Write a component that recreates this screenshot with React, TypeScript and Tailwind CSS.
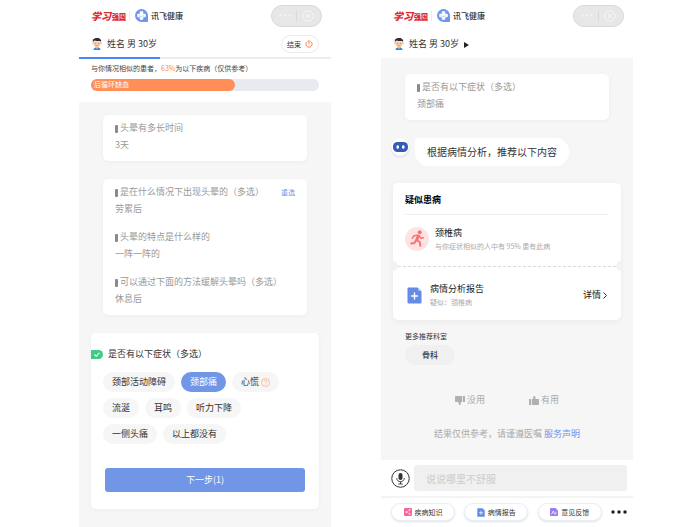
import React, { useState } from 'react';
import clsx from 'clsx';

interface QA {
  question: string;
  answer: string;
}

const history: QA[][] = [
  [{ question: '头晕有多长时间', answer: '3天' }],
  [
    { question: '是在什么情况下出现头晕的（多选）', answer: '劳累后' },
    { question: '头晕的特点是什么样的', answer: '一阵一阵的' },
    { question: '可以通过下面的方法缓解头晕吗（多选）', answer: '休息后' },
  ],
];

const symptomRows = [
  ['颈部活动障碍', '颈部痛', '心慌'],
  ['流涎', '耳鸣', '听力下降'],
  ['一侧头痛', '以上都没有'],
];

const BrandMark = () => (
  <svg viewBox="0 0 26 26" className="w-[13px] h-[13px] shrink-0" aria-hidden="true">
    <path d="M13 0a13 13 0 0 1 13 13v11.500a1.500 1.500 0 0 1-1.500 1.500H13A13 13 0 0 1 13 0z" fill="#7196ee" />
    <path d="M10.500 5.500h5v5h5v5h-5v5h-5v-5h-5v-5h5z" fill="#fff" stroke="#fff" strokeWidth="2" strokeLinejoin="round" />
    <path d="M7.500 13c3 2.500 6.500 2.500 10 0" fill="none" stroke="#a9c0f5" strokeWidth="1.500" />
  </svg>
);

const Avatar = () => (
  <svg viewBox="0 0 20 24" className="w-[10px] h-3 shrink-0" aria-hidden="true">
    <path d="M3 24c0-4 3-5.500 7-5.500s7 1.500 7 5.500z" fill="#1d8ff0" />
    <path d="M7.500 15h5v4.500L10 22l-2.500-2.500z" fill="#f3b48d" />
    <circle cx="2.200" cy="10.500" r="1.800" fill="#f5b791" />
    <circle cx="17.800" cy="10.500" r="1.800" fill="#f5b791" />
    <path d="M3 7h14v4c0 4.500-3 7.500-7 7.500S3 15.500 3 11z" fill="#fcc9a5" />
    <path d="M2 8C1 4 2 2 4 2c2-2.500 11-2.500 13 1 1.800 1 1.500 3 1 5l-1.500-2C12 6.500 8 6 5 5L3.500 6.500z" fill="#2c2d35" />
    <circle cx="7" cy="10.500" r=".8" fill="#555" />
    <circle cx="13" cy="10.500" r=".8" fill="#555" />
    <path d="M7.500 14.500q2.500 2 5 0" stroke="#e07a68" strokeWidth="1.200" fill="none" />
  </svg>
);

const PowerIcon = () => (
  <svg viewBox="0 0 16 16" className="w-2 h-2" fill="none" stroke="#ff7c48" strokeWidth="2" strokeLinecap="round" aria-hidden="true">
    <path d="M4.500 2.800a6.300 6.300 0 1 0 7 0M8 1v7" />
  </svg>
);

const Robot = () => (
  <svg viewBox="0 0 30 20" className="w-[15px] h-[10px]" aria-hidden="true">
    <rect width="30" height="20" rx="9" fill="#345cb4" />
    <rect x="7" y="6.500" width="5" height="7" rx="2.500" fill="#fff" />
    <rect x="18" y="6.500" width="5" height="7" rx="2.500" fill="#fff" />
  </svg>
);

const Runner = () => (
  <svg viewBox="0 0 30 34" className="w-[15px] h-[17px]" fill="none" stroke="#fa7377" strokeLinecap="round" strokeLinejoin="round" aria-hidden="true">
    <circle cx="19.500" cy="4.500" r="4" fill="#fa7377" stroke="none" />
    <path d="M16.500 12l-3 8" strokeWidth="6" />
    <path d="M15.500 10.500l-7.500 1-3.500 5" strokeWidth="3" />
    <path d="M18 11.500l4 5 5-1" strokeWidth="3" />
    <path d="M14 20.500l6 4 .5 7" strokeWidth="4" />
    <path d="M12.500 20l-3.500 6-6.500 1" strokeWidth="4" />
  </svg>
);

const ReportIcon = ({ className }: { className: string }) => (
  <svg viewBox="0 0 30 34" className={className} aria-hidden="true">
    <path d="M2 1h19l8 8v22a2 2 0 0 1-2 2H3a2 2 0 0 1-2-2V3a2 2 0 0 1 1-2z" fill="#648ce4" />
    <path d="M22 1v5a2 2 0 0 0 2 2h5z" fill="#a9c0f2" />
    <path d="M15 12v12M9 18h12" stroke="#fff" strokeWidth="2.800" strokeLinecap="round" />
  </svg>
);

const KnowledgeIcon = () => (
  <svg viewBox="0 0 16 16" className="w-2 h-2" aria-hidden="true">
    <rect width="16" height="16" rx="2" fill="#fb62a0" />
    <path d="M11.500 4L5 8l6.500 4" stroke="#fff" strokeWidth="1" fill="none" />
    <circle cx="11.500" cy="4" r="1.500" fill="#fff" />
    <circle cx="4.800" cy="8" r="1.700" fill="#fff" />
    <circle cx="11.500" cy="12" r="1.500" fill="#fff" />
  </svg>
);

const FeedbackIcon = () => (
  <svg viewBox="0 0 16 16" className="w-2 h-2" aria-hidden="true">
    <path d="M1 0h10l5 5v10a1 1 0 0 1-1 1H1a1 1 0 0 1-1-1V1a1 1 0 0 1 1-1z" fill="#9a7cf6" />
    <path d="M3.500 12l3-6 2.500 6M11.500 8v4" stroke="#fff" strokeWidth="1.500" fill="none" strokeLinecap="round" />
  </svg>
);

const ThumbUp = ({ className }: { className?: string }) => (
  <svg viewBox="0 0 20 18" className={clsx('w-[10px] h-[9px]', className)} fill="#b0b0b0" aria-hidden="true">
    <path d="M0 6h4v12H0zM5.500 6.500L8.500 5V1.500C9 -.5 13 -.5 13 3v3h6c1 0 1.200 1 1 2v8c0 1.200-1 2-2 2H5.500z" />
  </svg>
);

const MicIcon = () => (
  <svg viewBox="0 0 38 38" className="w-[19px] h-[19px]" fill="none" stroke="#333" aria-hidden="true">
    <circle cx="19" cy="19" r="17.500" strokeWidth="2" />
    <rect x="15" y="8" width="8" height="14" rx="4" fill="#333" stroke="none" />
    <path d="M11.500 18c0 10 15 10 15 0M19 25.500V30M14.500 30h9" strokeWidth="1.800" />
  </svg>
);

const TopBar = () => (
  <header className="flex items-center h-[31px] pl-3 pr-[9px]">
    <div className="flex items-center text-[#dc2a30] whitespace-nowrap">
      <span className="w-5 text-[10px] leading-4 font-black italic">学习</span>
      <span className="mt-px ml-px text-[7px] leading-[8px] font-black border-b border-[#e9636a]">强国</span>
    </div>
    <span className="w-px h-[10px] ml-[3px] mr-[5px] bg-[#ececec]" />
    <BrandMark />
    <span className="ml-[3px] text-[8px] leading-3 font-medium text-[#333]">讯飞健康</span>
    <div className="flex items-center justify-around w-[51px] h-[22px] ml-auto px-1 rounded-full border border-[#dadada] bg-[#e7e7e7]">
      <button aria-label="更多">
        <svg viewBox="0 0 24 6" className="w-3 h-[3px]" fill="#f8f8f8">
          <circle cx="3" cy="3" r="2" />
          <circle cx="12" cy="3" r="2" />
          <circle cx="21" cy="3" r="2" />
        </svg>
      </button>
      <span className="w-px h-[10px] bg-[#d8d8d8]" />
      <button aria-label="关闭">
        <svg viewBox="0 0 24 24" className="w-3 h-3" fill="none" stroke="#f6f6f6" strokeWidth="2">
          <circle cx="12" cy="12" r="10.500" />
          <path d="M8 8l8 8M16 8l-8 8" />
        </svg>
      </button>
    </div>
  </header>
);

const Patient = () => (
  <>
    <Avatar />
    <span className="ml-[5px] text-[9px] leading-3 text-[#333]">姓名 男 30岁</span>
  </>
);

const HistoryCard = ({ items, canRedo }: { items: QA[]; canRedo?: boolean }) => (
  <section className="flex flex-col gap-4 mx-6 px-3 pt-[7px] pb-[10px] rounded-[5px] bg-white shadow-[0_1px_4px_rgba(0,0,0,0.04)] text-[9px] leading-3 text-[#999]">
    {items.map((item, index) => (
      <div key={item.question}>
        <div className="flex items-center">
          <span className="w-[3px] h-2 mr-[2px] mt-[2px] rounded-[1px] bg-[#8a8a8a]" />
          <h3 className="whitespace-nowrap">{item.question}</h3>
          {canRedo && index === 0 && (
            <button className="ml-auto text-[7px] leading-3 text-[#6f95e8]">重选</button>
          )}
        </div>
        <p className="mt-[5px]">{item.answer}</p>
      </div>
    ))}
  </section>
);

const QuestionScreen = () => {
  const [selected, setSelected] = useState<string[]>(['颈部痛']);

  const toggle = (name: string) =>
    setSelected((prev) => (prev.includes(name) ? prev.filter((s) => s !== name) : [...prev, name]));

  return (
    <main className="flex flex-col flex-1 min-w-0 bg-[#f6f6f6]">
      <div className="pb-[11px] bg-white">
        <TopBar />
        <div className="flex items-center h-[26px] px-3 pl-[13px]">
          <Patient />
          <button className="flex items-center justify-center gap-1 w-[38px] h-[18px] ml-auto rounded-full border border-[#ebebeb] text-[7px] leading-3 text-[#333]">
            结束
            <PowerIcon />
          </button>
        </div>
        <div className="h-[2px] bg-[#ececec]">
          <div className="w-[32%] h-full bg-[#4a88fa]" />
        </div>
        <p className="h-5 px-3 text-[7px] leading-[18px] text-[#444] whitespace-nowrap">
          与你情况相似的患者，<span className="text-[#ff8748]">63%</span>为以下疾病（仅供参考）
        </p>
        <div className="mx-3 rounded-full overflow-hidden bg-[#e9eaef]">
          <div className="w-[63%] h-3 pl-[3px] rounded-r-full bg-[#ff8f57] text-[7px] leading-[11px] text-white">后循环缺血</div>
        </div>
      </div>

      <div className="flex flex-col gap-[18px] pt-[13px] pb-[18px]">
        <HistoryCard items={history[0]} />
        <HistoryCard items={history[1]} canRedo />

        <section className="mx-3 pt-[15px] pb-[17px] rounded-[5px] bg-white shadow-[0_1px_4px_rgba(0,0,0,0.04)]">
          <div className="flex items-center">
            <span className="flex items-center justify-center w-3 h-[9px] rounded-r-full bg-[#3fcb86]">
              <svg viewBox="0 0 12 10" className="w-[6px] h-[5px]" fill="none" stroke="#fff" strokeWidth="2.200" aria-hidden="true">
                <path d="M1 5l3.500 3.500L11 1.500" />
              </svg>
            </span>
            <h2 className="ml-[5px] text-[9px] leading-3 text-[#333]">是否有以下症状（多选）</h2>
          </div>
          <div className="flex flex-col gap-[6px] mt-3 pl-3">
            {symptomRows.map((row) => (
              <div key={row[0]} className="flex gap-[6px]">
                {row.map((name) => {
                  const active = selected.includes(name);
                  return (
                    <button
                      key={name}
                      aria-pressed={active}
                      onClick={() => toggle(name)}
                      className={clsx(
                        'flex items-center h-5 px-[9px] rounded-full text-[9px] leading-3 whitespace-nowrap',
                        active ? 'bg-[#7296e6] text-white' : 'bg-[#f6f6f6] text-[#333]'
                      )}
                    >
                      {name}
                      {name === '心慌' && (
                        <svg viewBox="0 0 18 18" className="w-[9px] h-[9px] ml-[2px]" fill="none" stroke="#f9a67c" strokeWidth="1.400" aria-hidden="true">
                          <circle cx="9" cy="9" r="8" />
                          <path d="M6.300 7c0-3.500 5.400-3.500 5.400 0 0 2-2.700 1.800-2.700 4M9 12.500v1.500" />
                        </svg>
                      )}
                    </button>
                  );
                })}
              </div>
            ))}
          </div>
          <div className="flex mt-6 px-[14px]">
            <button className="flex-1 h-6 rounded-[3px] bg-[#7296e6] text-[9px] leading-3 text-white">
              下一步({selected.length})
            </button>
          </div>
        </section>
      </div>
    </main>
  );
};

const quickActions = [
  { label: '疾病知识', icon: <KnowledgeIcon /> },
  { label: '病情报告', icon: <ReportIcon className="w-2 h-[9px]" /> },
  { label: '意见反馈', icon: <FeedbackIcon /> },
];

const ResultScreen = () => {
  return (
    <main className="flex flex-col flex-1 min-w-0 bg-[#f6f6f6]">
      <div className="pb-px bg-white">
        <TopBar />
        <div className="flex items-center h-[26px] px-[13px]">
          <Patient />
          <svg viewBox="0 0 10 12" className="w-[5px] h-[6px] ml-[5px] mt-[2px]" fill="#222" aria-hidden="true">
            <path d="M0 0l10 6-10 6z" />
          </svg>
        </div>
      </div>

      <div className="flex-1 pt-4">
        <HistoryCard items={[{ question: '是否有以下症状（多选）', answer: '颈部痛' }]} />

        <div className="flex items-start mt-[18px] pl-[10px]">
          <span className="flex items-center justify-center w-[18px] h-[18px] rounded-full bg-white shadow-[0_1px_2px_rgba(60,90,180,0.2)]">
            <Robot />
          </span>
          <p className="ml-[6px] px-3 text-[10px] leading-7 text-[#333] rounded-[14px] rounded-tl-[3px] bg-white whitespace-nowrap">
            根据病情分析，推荐以下内容
          </p>
        </div>

        <section className="mx-3 mt-[17px] rounded-[5px] bg-white shadow-[0_2px_6px_rgba(0,0,0,0.05)]">
          <h2 className="mx-3 pt-[11px] pb-2 border-b border-[#f0f0f0] text-[9px] leading-3 font-bold text-black">疑似患病</h2>
          <div className="flex items-center h-[51px] pb-1 px-3">
            <span className="flex items-center justify-center w-6 h-6 rounded-full bg-[#fee3e3]">
              <Runner />
            </span>
            <div className="ml-[6px]">
              <h3 className="text-[9px] leading-[14px] text-[#222]">颈椎病</h3>
              <p className="text-[7px] leading-3 text-[#aaa] whitespace-nowrap">与你症状相似的人中有 95% 患有此病</p>
            </div>
          </div>
          <div className="flex items-center h-0">
            <span className="w-[5px] h-[10px] rounded-r-full bg-[#f3f3f3]" />
            <span className="flex-1 border-t border-dashed border-[#d8d8d8]" />
            <span className="w-[5px] h-[10px] rounded-l-full bg-[#f3f3f3]" />
          </div>
          <div className="flex items-center h-[54px] pt-1 px-[14px]">
            <ReportIcon className="w-[15px] h-[17px]" />
            <div className="ml-2">
              <h3 className="text-[9px] leading-[14px] text-[#222]">病情分析报告</h3>
              <p className="text-[7px] leading-3 text-[#aaa]">疑似：颈椎病</p>
            </div>
            <a href="#report" className="flex items-center ml-auto text-[9px] leading-3 text-[#222]">
              详情
              <svg viewBox="0 0 8 14" className="w-1 h-[7px] ml-[2px]" fill="none" stroke="#333" strokeWidth="2" aria-hidden="true">
                <path d="M1 1l6 6-6 6" />
              </svg>
            </a>
          </div>
        </section>

        <div className="mt-[10px] px-6">
          <h2 className="text-[7px] leading-3 text-[#333]">更多推荐科室</h2>
          <button className="w-[50px] h-5 mt-[3px] rounded-full bg-[#f0f0f0] text-[8px] leading-5 font-medium text-[#333] block">骨科</button>
        </div>

        <div className="flex justify-center gap-11 mt-[29px] text-[9px] leading-3 text-[#aaa]">
          <button className="flex items-center gap-[2px]">
            <ThumbUp className="rotate-180" />
            没用
          </button>
          <button className="flex items-center gap-[2px]">
            <ThumbUp />
            有用
          </button>
        </div>
        <p className="mt-[22px] text-center text-[9px] leading-3 text-[#aaa] whitespace-nowrap">
          结果仅供参考，请谨遵医嘱 <a href="#terms" className="text-[#6f95e8]">服务声明</a>
        </p>
      </div>

      <footer className="bg-white">
        <div className="flex items-center gap-1 h-9 pl-[10px] pr-[6px]">
          <button aria-label="语音输入">
            <MicIcon />
          </button>
          <input
            type="text"
            aria-label="症状描述"
            placeholder="说说哪里不舒服"
            className="flex-1 min-w-0 h-[26px] px-3 rounded-[3px] bg-[#f0f0f0] text-[10px] leading-4 text-[#333] placeholder:text-[#ccc] outline-none"
          />
        </div>
        <div className="flex items-center justify-between h-[31px] pl-[10px] pr-[6px] pb-px border-t-2 border-[#f4f4f4]">
          {quickActions.map((action) => (
            <button
              key={action.label}
              className="flex items-center justify-center gap-[3px] w-16 h-[18px] rounded-full border border-[#ebeef2] bg-white shadow-[0_1px_2px_rgba(80,150,210,0.25)] text-[7px] leading-3 text-[#333]"
            >
              {action.icon}
              {action.label}
            </button>
          ))}
          <button aria-label="更多功能">
            <svg viewBox="0 0 32 8" className="w-4 h-1" fill="#222">
              <circle cx="4" cy="4" r="3.500" />
              <circle cx="16" cy="4" r="3.500" />
              <circle cx="28" cy="4" r="3.500" />
            </svg>
          </button>
        </div>
      </footer>
    </main>
  );
};

const App: React.FC = () => {
  return (
    <div lang="zh-CN" className="flex gap-[50px] min-h-screen pl-[79px] pr-[67px] bg-white font-[Noto_Sans_CJK_SC,sans-serif]">
      <QuestionScreen />
      <ResultScreen />
    </div>
  );
};

export default App;
